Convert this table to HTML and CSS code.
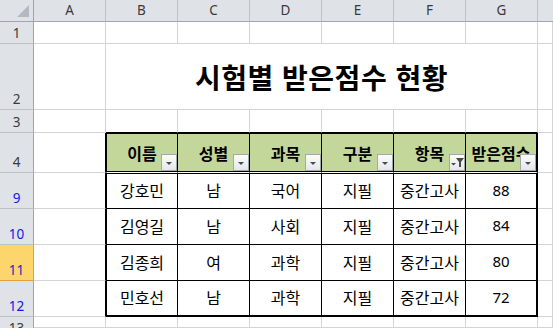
FILE: index.html
```html
<!DOCTYPE html>
<html lang="ko">
<head>
<meta charset="utf-8">
<title>시험별 받은점수 현황</title>
<link rel="stylesheet" href="styles.css">
</head>
<body>
<div class="sheet">
  <!-- column headers -->
  <div class="corner"><span class="tri"></span></div>
  <div class="ch">A</div><div class="ch">B</div><div class="ch">C</div><div class="ch">D</div>
  <div class="ch">E</div><div class="ch">F</div><div class="ch">G</div><div class="ch ch-last"></div>

  <!-- row 1 -->
  <div class="rh">1</div>
  <div class="c"></div><div class="c"></div><div class="c"></div><div class="c"></div>
  <div class="c"></div><div class="c"></div><div class="c"></div><div class="c"></div>

  <!-- row 2 -->
  <div class="rh">2</div>
  <div class="c"></div>
  <div class="c title">시험별 받은점수 현황</div>
  <div class="c"></div>

  <!-- row 3 -->
  <div class="rh">3</div>
  <div class="c"></div>
  <div class="c edge-top"></div><div class="c edge-top"></div><div class="c edge-top"></div>
  <div class="c edge-top"></div><div class="c edge-top"></div><div class="c edge-top"></div>
  <div class="c"></div>

  <!-- row 4: table header -->
  <div class="rh">4</div>
  <div class="c edge-left"></div>
  <div class="t th first">이름<span class="fbtn"><svg viewBox="0 0 14 15" width="14" height="15"><path d="M4 7H10L7 10Z"/></svg></span></div>
  <div class="t th">성별<span class="fbtn"><svg viewBox="0 0 14 15" width="14" height="15"><path d="M4 7H10L7 10Z"/></svg></span></div>
  <div class="t th">과목<span class="fbtn"><svg viewBox="0 0 14 15" width="14" height="15"><path d="M4 7H10L7 10Z"/></svg></span></div>
  <div class="t th">구분<span class="fbtn"><svg viewBox="0 0 14 15" width="14" height="15"><path d="M4 7H10L7 10Z"/></svg></span></div>
  <div class="t th">항목<span class="fbtn"><svg viewBox="0 0 14 15" width="14" height="15"><path d="M1 8H6L3.5 10.5Z"/><path d="M6 3H14L11 7V12H9V7Z"/></svg></span></div>
  <div class="t th last">받은점수<span class="fbtn"><svg viewBox="0 0 14 15" width="14" height="15"><path d="M4 7H10L7 10Z"/></svg></span></div>
  <div class="c"></div>

  <!-- row 9 -->
  <div class="rh filt">9</div>
  <div class="c edge-left"></div>
  <div class="t td first r-first">강호민</div>
  <div class="t td r-first">남</div>
  <div class="t td r-first">국어</div>
  <div class="t td r-first">지필</div>
  <div class="t td r-first">중간고사</div>
  <div class="t td num last r-first">88</div>
  <div class="c"></div>

  <!-- row 10 -->
  <div class="rh filt">10</div>
  <div class="c edge-left"></div>
  <div class="t td first">김영길</div>
  <div class="t td">남</div>
  <div class="t td">사회</div>
  <div class="t td">지필</div>
  <div class="t td">중간고사</div>
  <div class="t td num last">84</div>
  <div class="c"></div>

  <!-- row 11 -->
  <div class="rh filt active">11</div>
  <div class="c edge-left"></div>
  <div class="t td first">김종희</div>
  <div class="t td">여</div>
  <div class="t td">과학</div>
  <div class="t td">지필</div>
  <div class="t td">중간고사</div>
  <div class="t td num last">80</div>
  <div class="c"></div>

  <!-- row 12 -->
  <div class="rh filt">12</div>
  <div class="c edge-left"></div>
  <div class="t td first r-last">민호선</div>
  <div class="t td r-last">남</div>
  <div class="t td r-last">과학</div>
  <div class="t td r-last">지필</div>
  <div class="t td r-last">중간고사</div>
  <div class="t td num last r-last">72</div>
  <div class="c"></div>

  <!-- row 13 (partly visible) -->
  <div class="rh peek">13</div>
  <div class="c"></div><div class="c"></div><div class="c"></div><div class="c"></div>
  <div class="c"></div><div class="c"></div><div class="c"></div><div class="c"></div>
</div>
</body>
</html>
```
FILE: styles.css
```css
html, body {
  margin: 0;
  padding: 0;
  background: #ffffff;
  overflow: hidden;
}

.sheet {
  display: grid;
  grid-template-columns: 34px repeat(7, 72px) 1fr;
  grid-template-rows: 22px 22px 66px 23px 40px 36px 36px 36px 36px 11px;
  width: 553px;
  height: 328px;
  overflow: hidden;
  font-family: "Noto Sans CJK KR", "Noto Sans", sans-serif;
  color: #000;
}

.sheet > div {
  box-sizing: border-box;
  min-width: 0;
}

/* corner & headers */
.corner {
  background: #dfe3e8;
  border-right: 1px solid #9ea5ae;
  border-bottom: 1px solid #9ea5ae;
  position: relative;
}
.corner .tri {
  position: absolute;
  right: 4px;
  bottom: 4px;
  width: 0;
  height: 0;
  border-left: 12px solid transparent;
  border-bottom: 12px solid #b4b8bf;
}

.ch {
  background: #dfe3e8;
  border-right: 1px solid #bcc2ca;
  border-bottom: 1px solid #9ea5ae;
  display: flex;
  align-items: center;
  justify-content: center;
  font-family: "Noto Sans", "Open Sans", sans-serif;
  font-size: 13.5px;
  color: #3a3a3a;
  line-height: 1;
}
.ch-last {
  border-right: none;
}

.rh {
  background: #dfe3e8;
  border-right: 1px solid #9ea5ae;
  border-bottom: 1px solid #bcc2ca;
  display: flex;
  align-items: flex-end;
  justify-content: center;
  padding-bottom: 3px;
  font-family: "Noto Sans", "Open Sans", sans-serif;
  font-size: 13.5px;
  color: #3a3a3a;
  line-height: 1;
}
.rh.filt {
  color: #1414f0;
}
.rh.active {
  background: #fcd56c;
  border-right-color: #e2a23a;
  border-bottom-color: #e2a23a;
  color: #2a2ab8;
}
.rh.peek {
  align-items: flex-start;
  padding-bottom: 0;
  padding-top: 5px;
  overflow: hidden;
  border-bottom: none;
}

/* ordinary cells */
.c {
  border-right: 1px solid #d4d4d4;
  border-bottom: 1px solid #d4d4d4;
}

.title {
  grid-column: span 6;
  display: flex;
  align-items: center;
  justify-content: center;
  font-size: 28px;
  font-weight: 700;
  letter-spacing: 0.5px;
  line-height: 1;
  padding-top: 1px;
}

.edge-top {
  border-bottom-color: #000;
}
.edge-left {
  border-right-color: #000;
}

/* table cells */
.t {
  border-right: 1px solid #000;
  border-bottom: 1px solid #000;
  display: flex;
  align-items: center;
  justify-content: center;
  position: relative;
  white-space: nowrap;
  font-size: 16px;
  line-height: 1;
}
.t.first {
  border-left: 1px solid #000;
}
.t.last {
  border-right: 2px solid #000;
}

.th {
  background: #c4d79b;
  border-top: 1px solid #000;
  border-bottom: 1px solid #ffffff;
  box-shadow: inset 0 -1px 0 #000;
  font-weight: 700;
  font-size: 16px;
  padding-bottom: 1px;
}

.td {
  padding-bottom: 2px;
}
.td.r-first {
  border-top: 1px solid #000;
}
.td.r-last {
  border-bottom: 2px solid #000;
}
.td.num {
  font-family: "Noto Sans", "Open Sans", sans-serif;
  font-size: 15px;
}

/* filter dropdown buttons */
.fbtn {
  position: absolute;
  right: 0;
  bottom: 1px;
  width: 16px;
  height: 17px;
  box-sizing: border-box;
  border: 1px solid #a3a8ae;
  background: linear-gradient(#fcfcfc, #e4e6e9);
  display: block;
}
.fbtn svg {
  display: block;
  fill: #4a4a4a;
}
```
